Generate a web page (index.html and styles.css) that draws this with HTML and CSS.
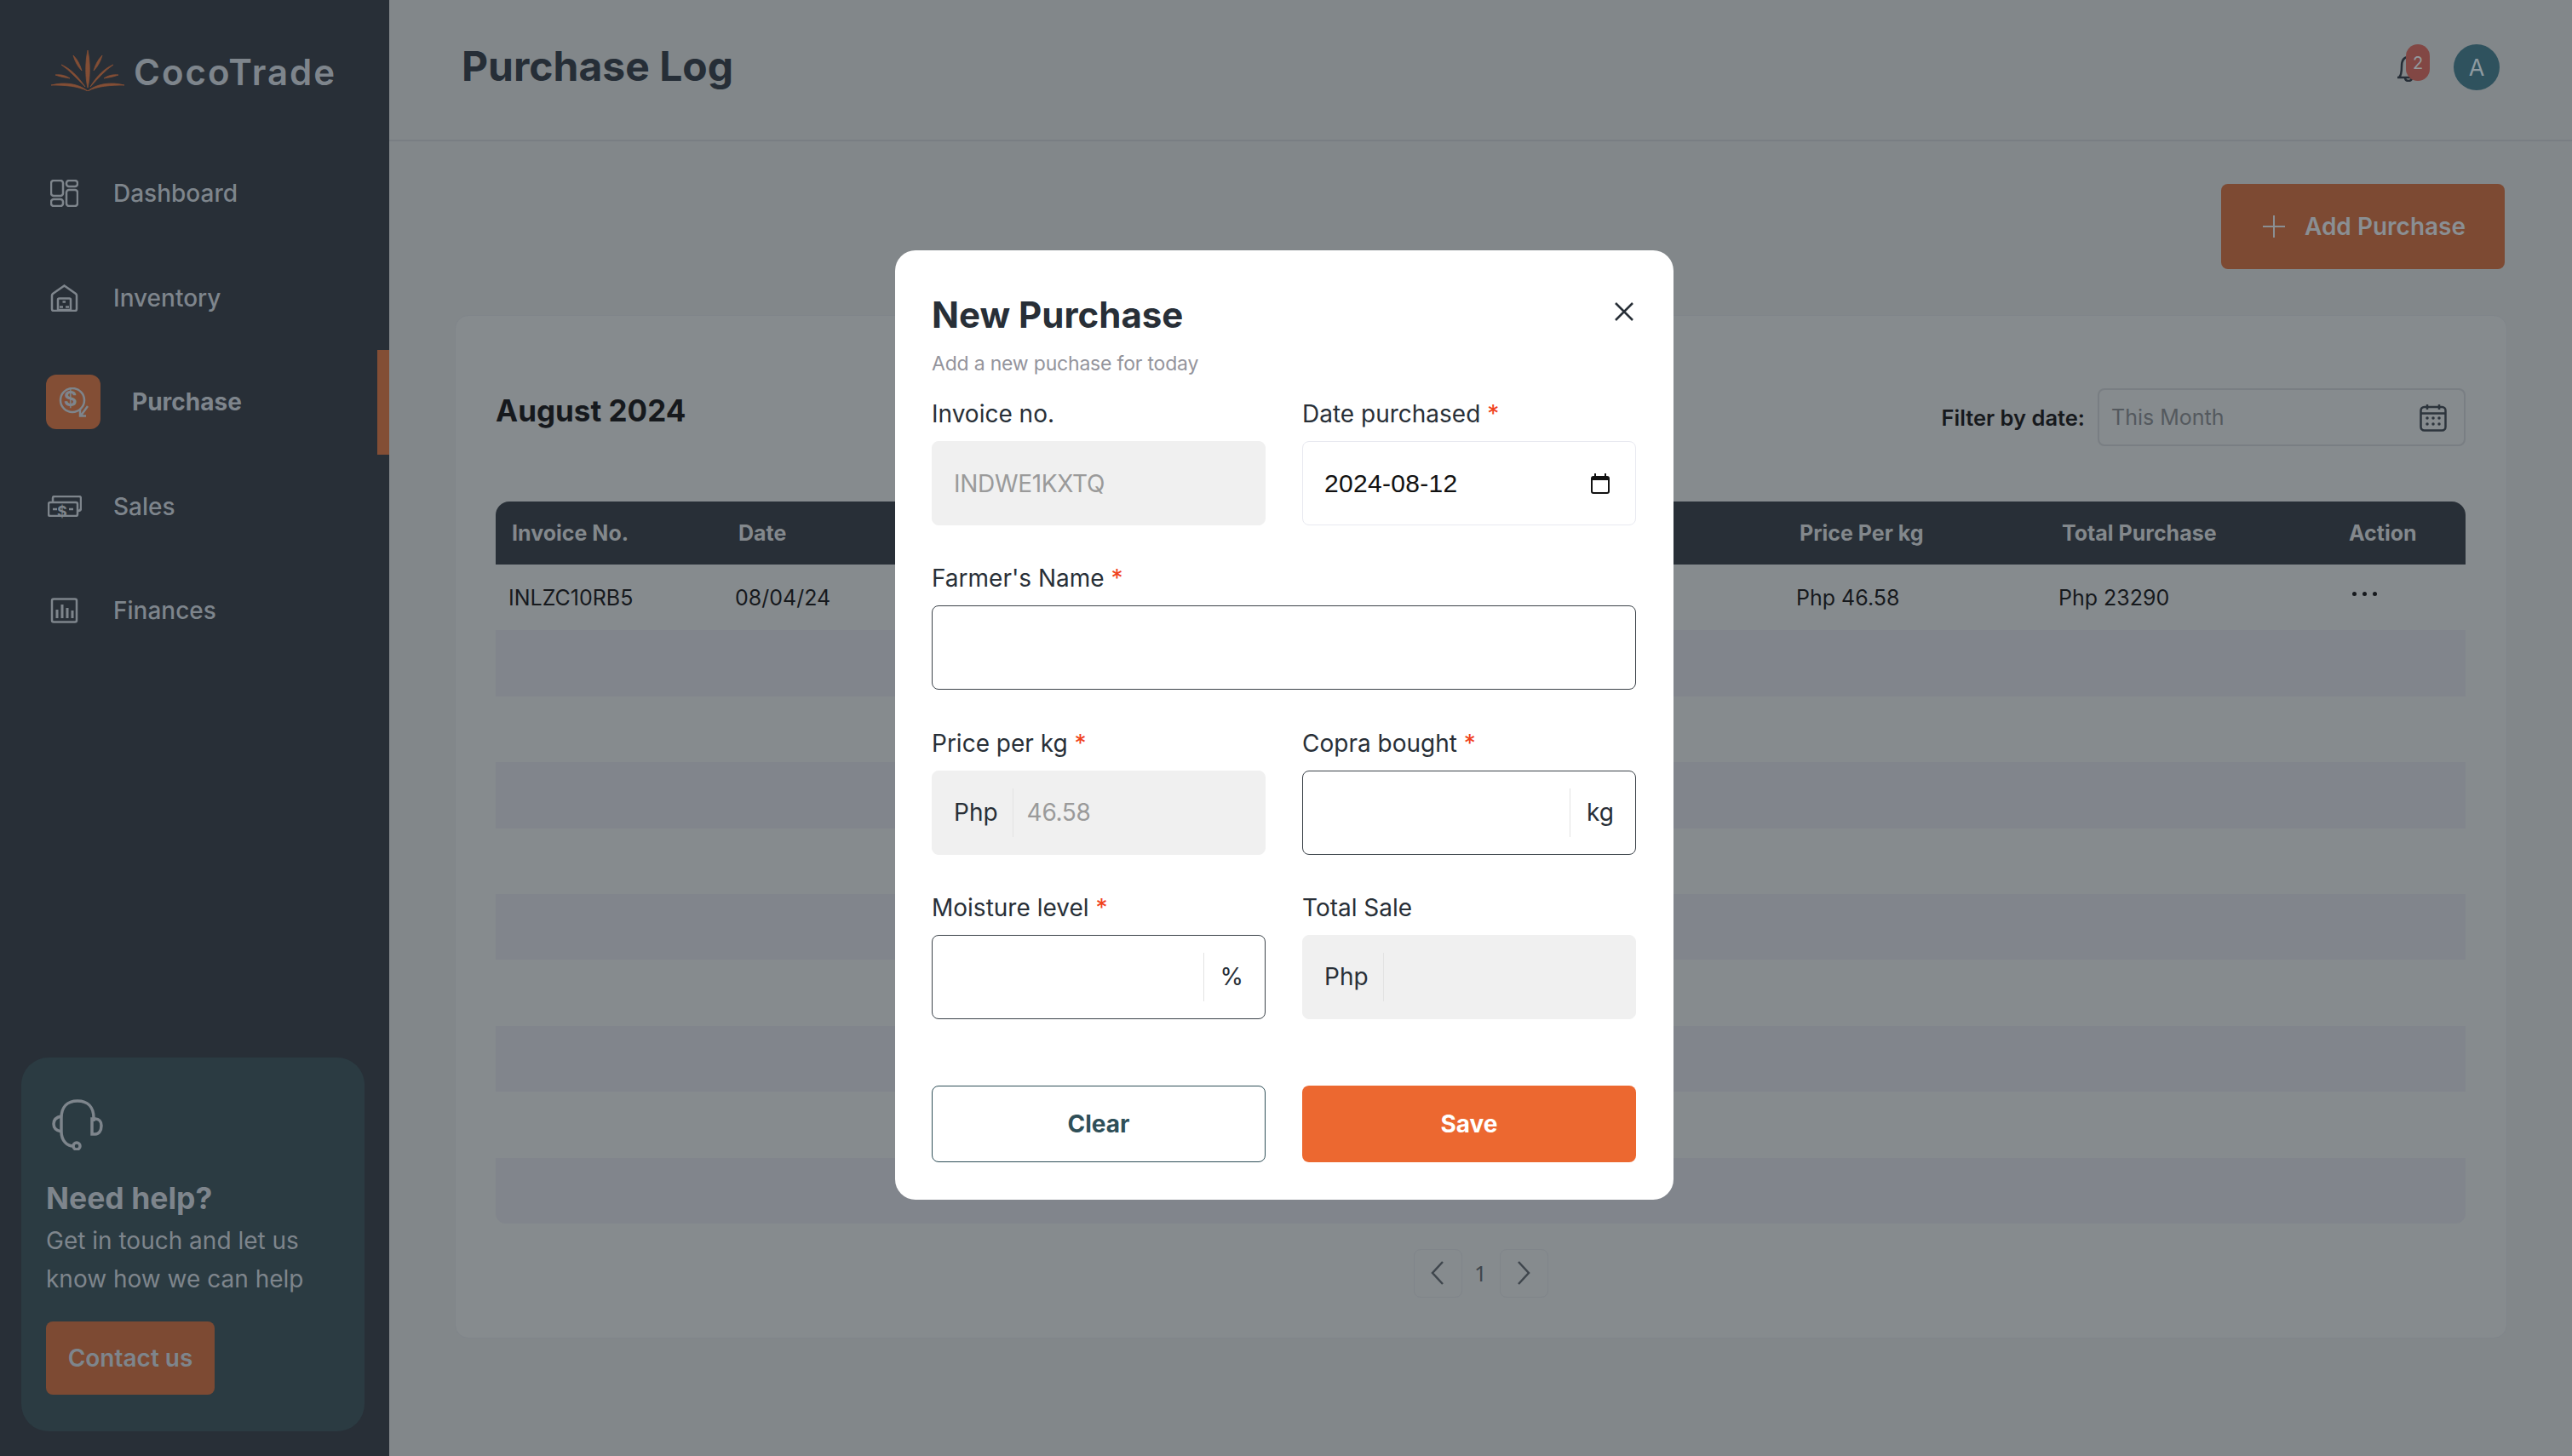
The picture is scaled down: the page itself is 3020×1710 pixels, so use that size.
FILE: index.html
```html
<html>
<head>
  <title>CocoTrade - Purchase Log</title>
  <link rel="stylesheet" href="styles.css">
</head>
<body>

  <div id="app">

    <aside class="sidebar">
      <div class="logo">
        <svg class="logo-mark" width="86" height="48" viewBox="0 0 86 48">
          <path d="M43 0 C40 14 40 32 43 44 C46 32 46 14 43 0Z"/>
          <path d="M26 6 C28 13 31 19 36 24 C34 17 31 11 26 6Z"/>
          <path d="M60 6 C58 13 55 19 50 24 C52 17 55 11 60 6Z"/>
          <path d="M12 17 C22 21 32 31 40 43 C30 33 22 24 12 17Z"/>
          <path d="M73 17 C63 21 53 31 46 43 C55 33 63 24 73 17Z"/>
          <path d="M5 29 C11 28 18 30 22 33 C16 32 10 31 5 29Z"/>
          <path d="M79 29 C73 28 66 30 62 33 C68 32 74 31 79 29Z"/>
          <path d="M0 41 C16 37 32 39 43 48 C54 39 70 37 86 41 C70 41 54 42 43 48 C32 42 16 41 0 41Z"/>
        </svg>
        <span class="logo-text">CocoTrade</span>
      </div>

      <nav class="nav">
        <a class="nav-item">
          <svg class="nav-icon" width="33" height="32" viewBox="0 0 33 32">
            <rect x="1" y="1" width="14" height="18" rx="3"/>
            <rect x="19" y="1" width="13" height="7" rx="3"/>
            <rect x="1" y="23" width="14" height="8" rx="3"/>
            <rect x="19" y="12" width="13" height="19" rx="3"/>
          </svg>
          <span>Dashboard</span>
        </a>
        <a class="nav-item">
          <svg class="nav-icon" width="33" height="32" viewBox="0 0 33 32">
            <path d="M2 29 V13 C2 12 2.500 11.500 3 11 L16.500 1.500 L30 11 C30.500 11.500 31 12 31 13 V29 C31 30 30.500 31 29 31 H4 C2.500 31 2 30 2 29Z"/>
            <path d="M9 31 V18 C9 17 9.500 16.500 10.500 16.500 H22.500 C23.500 16.500 24 17 24 18 V31"/>
            <path d="M14.500 20.500 H18 M11 26.500 H15 M18 26.500 H22 M9 30 H24"/>
          </svg>
          <span>Inventory</span>
        </a>
        <a class="nav-item active">
          <span class="nav-chip">
            <svg class="nav-icon" width="38" height="38" viewBox="0 0 38 38">
              <circle cx="16" cy="15" r="14"/>
              <path d="M34 22 L26 33 M25 26 V33.500 H32"/>
            </svg>
            <span class="chip-dollar">$</span>
          </span>
          <span>Purchase</span>
        </a>
        <a class="nav-item">
          <svg class="nav-icon wide" width="40" height="25" viewBox="0 0 40 25">
            <rect x="1" y="8" width="34" height="16" rx="2"/>
            <path d="M6 8 V3 C6 2 6.500 1 8 1 H37 C38 1 39 2 39 3 V15 C39 17 38 18 35 18"/>
            <path d="M6 16 H11 M25 16 H30"/>
          </svg>
          <span class="sales-dollar">$</span>
          <span>Sales</span>
        </a>
        <a class="nav-item">
          <svg class="nav-icon" width="33" height="30" viewBox="0 0 33 30">
            <rect x="2" y="1.500" width="29" height="27" rx="2"/>
            <path d="M8 24 V14 M14 24 V8 M20 24 V12 M26 24 V15" stroke-width="3"/>
          </svg>
          <span>Finances</span>
        </a>
      </nav>

      <div class="help-card">
        <svg class="help-icon" width="60" height="60" viewBox="0 0 60 60">
          <path d="M11 38 V22 C11 9 18 2 30 2 C42 2 49 9 49 22 V26"/>
          <path d="M11 20 C5 21 2 24 2 29 C2 34 5 37 11 38"/>
          <path d="M47 23 H51 C55 23 58 26 58 31 C58 37 55 41 51 41 H47Z"/>
          <path d="M11 38 C11 49 18 55 25 55"/>
          <circle cx="29" cy="55" r="4"/>
        </svg>
        <h3>Need help?</h3>
        <p>Get in touch and let us<br>know how we can help</p>
        <button class="contact-btn">Contact us</button>
      </div>
    </aside>

    <main class="main">
      <header class="topbar">
        <h1>Purchase Log</h1>
        <div class="topbar-right">
          <div class="bell">
            <svg width="24" height="32" viewBox="0 0 24 32">
              <path d="M2 27 C4 25 5 21 5 14 C5 7 8 3 13 3 C18 3 21 7 21 14 C21 21 22 25 24 27 H0 M9 27 C9 30 11 31 13 31 C15 31 17 30 17 27"/>
            </svg>
            <span class="badge">2</span>
          </div>
          <div class="avatar">A</div>
        </div>
      </header>

      <div class="actions">
        <button class="add-btn">
          <svg width="28" height="28" viewBox="0 0 28 28"><path d="M14 1 V27 M1 14 H27"/></svg>
          Add Purchase
        </button>
      </div>

      <section class="card">
        <div class="card-head">
          <h2>August 2024</h2>
          <div class="filter">
            <label>Filter by date:</label>
            <div class="filter-box">
              <span>This Month</span>
              <svg width="32" height="33" viewBox="0 0 32 33">
                <rect x="1.500" y="4" width="29" height="27.500" rx="4"/>
                <path d="M9 1 V7 M23 1 V7 M2 11.500 H30"/>
                <path class="dots" d="M9 17 h.01 M16 17 h.01 M23 17 h.01 M9 24 h.01 M16 24 h.01 M23 24 h.01"/>
              </svg>
            </div>
          </div>
        </div>

        <div class="table">
          <div class="table-row table-header">
            <div>Invoice No.</div>
            <div>Date</div>
            <div></div>
            <div>Price Per kg</div>
            <div>Total Purchase</div>
            <div>Action</div>
          </div>
          <div class="table-row">
            <div>INLZC10RB5</div>
            <div>08/04/24</div>
            <div></div>
            <div>Php 46.58</div>
            <div>Php 23290</div>
            <div class="row-menu"><i></i><i></i><i></i></div>
          </div>
          <div class="table-row"></div>
          <div class="table-row"></div>
          <div class="table-row"></div>
          <div class="table-row"></div>
          <div class="table-row"></div>
          <div class="table-row"></div>
          <div class="table-row"></div>
          <div class="table-row"></div>
          <div class="table-row"></div>
        </div>

        <div class="pagination">
          <button class="page-btn">
            <svg width="16" height="28" viewBox="0 0 16 28"><path d="M14 1 L2 14 L14 27"/></svg>
          </button>
          <span class="page-num">1</span>
          <button class="page-btn">
            <svg width="16" height="28" viewBox="0 0 16 28"><path d="M2 1 L14 14 L2 27"/></svg>
          </button>
        </div>
      </section>
    </main>
  </div>

  <!-- new purchase modal -->
  <div class="backdrop">
    <form class="modal">
      <div class="modal-title">
        <h2>New Purchase</h2>
        <svg class="close" width="22" height="22" viewBox="0 0 22 22"><path d="M1 1 L21 21 M21 1 L1 21"/></svg>
      </div>
      <p class="modal-sub">Add a new puchase for today</p>

      <div class="form-grid">
        <div class="field">
          <label>Invoice no.</label>
          <div class="control disabled"><input type="text" value="INDWE1KXTQ" disabled></div>
        </div>
        <div class="field">
          <label>Date purchased <b>*</b></label>
          <div class="control date-control">
            <input type="text" value="2024-08-12">
            <svg width="22" height="24" viewBox="0 0 22 24">
              <path d="M5 0 V4 M17 0 V4" stroke-width="2"/>
              <rect x="1" y="4" width="20" height="19" rx="2" stroke-width="2"/>
              <path d="M1 6 H21" stroke-width="4"/>
            </svg>
          </div>
        </div>
        <div class="field full">
          <label>Farmer's Name <b>*</b></label>
          <div class="control"><input type="text"></div>
        </div>
        <div class="field">
          <label>Price per kg <b>*</b></label>
          <div class="control disabled">
            <span class="addon left">Php</span>
            <input type="text" value="46.58" disabled>
          </div>
        </div>
        <div class="field">
          <label>Copra bought <b>*</b></label>
          <div class="control">
            <input type="text">
            <span class="addon right">kg</span>
          </div>
        </div>
        <div class="field">
          <label>Moisture level <b>*</b></label>
          <div class="control">
            <input type="text">
            <span class="addon right">%</span>
          </div>
        </div>
        <div class="field">
          <label>Total Sale</label>
          <div class="control disabled">
            <span class="addon left">Php</span>
            <input type="text" disabled>
          </div>
        </div>
      </div>

      <div class="modal-buttons">
        <button type="button" class="btn-clear">Clear</button>
        <button type="button" class="btn-save">Save</button>
      </div>
    </form>
  </div>

</body>
</html>
```

FILE: styles.css
```css
* {
  box-sizing: border-box;
}

body {
  margin: 0;
  background-color: #82878a;
  font-family: 'Inter', sans-serif;
  overflow: hidden;
}

button {
  font-family: inherit;
  border: none;
}

#app {
  display: flex;
  width: 3020px;
  height: 1710px;
}

/* sidebar */

.sidebar {
  width: 457px;
  flex-shrink: 0;
  display: flex;
  flex-direction: column;
  background-color: #282f37;
}

.logo {
  height: 166px;
  padding-left: 60px;
  padding-bottom: 1px;
  display: flex;
  align-items: center;
  gap: 11px;
}

.logo-mark {
  fill: #834e35;
  stroke: #834e35;
  stroke-width: 0.8;
}

.logo-text {
  margin-top: 3px;
  font-size: 42px;
  font-weight: 600;
  color: #7e858c;
  letter-spacing: 2px;
}

.nav-item {
  position: relative;
  height: 122.5px;
  padding-left: 59px;
  display: flex;
  align-items: center;
  gap: 41px;
  font-size: 28px;
  font-weight: 500;
  color: #7e858c;
}

.nav-icon {
  fill: none;
  stroke: #7e858c;
  stroke-width: 2.500;
  flex-shrink: 0;
}

.nav-icon.wide {
  margin-left: -3px;
  margin-right: -4px;
}

.sales-dollar {
  position: absolute;
  left: 67px;
  top: 56px;
  font-size: 18px;
  font-weight: 700;
}

.nav-item.active {
  padding-left: 54px;
  gap: 37px;
  font-weight: 700;
}

.nav-item.active::after {
  content: "";
  position: absolute;
  right: 0;
  top: 0;
  bottom: 0;
  width: 14px;
  background-color: #834e35;
}

.nav-chip {
  position: relative;
  width: 64px;
  height: 64px;
  border-radius: 12px;
  background-color: #834e35;
  display: flex;
  align-items: center;
  justify-content: center;
  padding-left: 3px;
  padding-top: 3px;
}

.chip-dollar {
  position: absolute;
  left: 21px;
  top: 14px;
  font-size: 24px;
  font-weight: 700;
}

.help-card {
  margin: auto 29px 29px 25px;
  height: 439px;
  border-radius: 32px;
  padding: 49px 29px 0;
  background-color: #2b3b42;
  color: #7e858c;
}

.help-icon {
  display: block;
  margin-left: 7px;
  fill: none;
  stroke: #7e858c;
  stroke-width: 3.500;
}

.help-card h3 {
  margin: 32px 0 2px;
  font-size: 35.500px;
  line-height: 50px;
  font-weight: 700;
}

.help-card p {
  margin: 0;
  font-size: 28px;
  line-height: 44.500px;
}

.contact-btn {
  display: block;
  margin-top: 28px;
  width: 198px;
  height: 86px;
  border-radius: 8px;
  background-color: #7d4a33;
  color: #7e858c;
  font-size: 28px;
  font-weight: 600;
}

/* main */

.main {
  flex: 1;
}

.topbar {
  height: 166px;
  padding: 0 85px 6px 85px;
  border-bottom: 2px solid #797e83;
  display: flex;
  align-items: center;
  justify-content: space-between;
}

.topbar h1 {
  margin: -3px 0 0;
  font-size: 48px;
  font-weight: 700;
  color: #262e37;
}

.topbar-right {
  display: flex;
  align-items: center;
  gap: 28px;
}

.bell {
  position: relative;
  width: 38px;
  height: 54px;
  padding-top: 12px;
}

.bell svg {
  display: block;
  fill: none;
  stroke: #262e37;
  stroke-width: 2.500;
}

.badge {
  position: absolute;
  right: 0;
  top: 0;
  width: 28px;
  height: 43px;
  border-radius: 14px;
  background-color: #824744;
  color: #939a9d;
  font-size: 20px;
  display: flex;
  align-items: center;
  justify-content: center;
}

.avatar {
  width: 54px;
  height: 54px;
  border-radius: 50%;
  background-color: #2f525e;
  color: #8e9aa0;
  font-size: 27px;
  display: flex;
  align-items: center;
  justify-content: center;
}

.actions {
  display: flex;
  justify-content: flex-end;
  padding: 50px 79px 0 0;
}

.add-btn {
  width: 333px;
  height: 100px;
  padding-left: 8px;
  border-radius: 8px;
  background-color: #7d4a33;
  color: #8a8f93;
  font-size: 28px;
  font-weight: 600;
  display: flex;
  align-items: center;
  justify-content: center;
  gap: 22px;
}

.add-btn svg {
  fill: none;
  stroke: #8a8f93;
  stroke-width: 2;
}

.card {
  margin: 54px 76px 0 77px;
  height: 1202px;
  padding: 85px 48px 0 47px;
  border-radius: 16px;
  border: 1px solid #80858a;
  background-color: #868b8e;
}

.card-head {
  display: flex;
  align-items: center;
  justify-content: space-between;
  height: 68px;
  margin-bottom: 65px;
}

.card-head h2 {
  margin: -16px 0 0;
  font-size: 35px;
  font-weight: 700;
  color: #16191d;
}

.filter {
  display: flex;
  align-items: center;
  gap: 15px;
  font-size: 25.500px;
  font-weight: 600;
  color: #16191d;
}

.filter-box {
  width: 432px;
  height: 68px;
  padding: 0 20px 0 14px;
  border: 2px solid #797e83;
  border-radius: 8px;
  display: flex;
  align-items: center;
  justify-content: space-between;
  font-size: 25px;
  font-weight: 400;
  color: #54595e;
}

.filter-box svg {
  fill: none;
  stroke: #2d353d;
  stroke-width: 2.500;
}

.filter-box .dots {
  stroke-linecap: round;
  stroke-width: 3.500;
}

.table {
  font-size: 25px;
}

.table-row {
  height: 77.400px;
  display: grid;
  grid-template-columns: 266px 250px 996px 308px 337px 156px;
  align-items: center;
  color: #16191d;
}

.table-row:nth-child(2n+3) {
  background-color: #81858c;
}

.table-row:last-child {
  border-radius: 0 0 12px 12px;
}

.table-row > div {
  padding-left: 15px;
}

.table-header {
  height: 74px;
  border-radius: 16px 16px 0 0;
  background-color: #282f37;
  color: #83888c;
  font-weight: 700;
}

.table-header > div {
  padding-left: 19px;
}

.table-row > .row-menu {
  display: flex;
  gap: 7px;
  padding-left: 23px;
  padding-bottom: 8px;
}

.row-menu i {
  width: 5px;
  height: 5px;
  border-radius: 50%;
  background-color: #16191d;
}

.pagination {
  margin-top: 30px;
  display: flex;
  justify-content: center;
  align-items: center;
}

.page-btn {
  width: 57px;
  height: 57px;
  border-radius: 8px;
  border: 1px solid #80858a;
  background: none;
  display: flex;
  align-items: center;
  justify-content: center;
}

.page-btn svg {
  fill: none;
  stroke: #3f464d;
  stroke-width: 2.500;
}

.page-num {
  width: 44px;
  text-align: center;
  font-family: 'Noto Sans', sans-serif;
  font-size: 26px;
  color: #3f464d;
}

/* modal */

.backdrop {
  position: fixed;
  left: 0;
  top: 0;
  width: 3020px;
  height: 1710px;
  padding: 294px 4px 0 0;
  display: flex;
  justify-content: center;
  align-items: flex-start;
}

.modal {
  width: 914px;
  height: 1115px;
  padding: 50px 44px 0 43px;
  border-radius: 24px;
  background-color: white;
  color: #282f37;
}

.modal-title {
  display: flex;
  align-items: center;
  justify-content: space-between;
  height: 50px;
}

.modal-title h2 {
  margin: 0;
  font-size: 42px;
  font-weight: 700;
}

.close {
  margin: -6px 3px 0 0;
  fill: none;
  stroke: #282f37;
  stroke-width: 2.500;
}

.modal-sub {
  margin: 18px 0 24px;
  font-size: 23px;
  line-height: 30px;
  letter-spacing: -0.2px;
  color: #94949c;
}

.form-grid {
  display: grid;
  grid-template-columns: minmax(0, 1fr) minmax(0, 1fr);
  column-gap: 43px;
  row-gap: 42.300px;
}

.field.full {
  grid-column: 1 / 3;
}

.field label {
  display: block;
  height: 40px;
  margin-bottom: 12px;
  font-size: 28px;
  line-height: 40px;
}

.field label b {
  font-weight: 400;
  color: #f0421c;
}

.control {
  height: 99px;
  display: flex;
  align-items: center;
  border: 1.500px solid #3b4249;
  border-radius: 8px;
  padding: 0 25px;
  font-size: 28px;
}

.control.disabled {
  border-color: #f0f0f0;
  background-color: #f0f0f0;
}

.control input {
  flex: 1;
  min-width: 0;
  height: 56px;
  padding: 0;
  border: none;
  outline: none;
  background: none;
  font-family: inherit;
  font-size: 28px;
  letter-spacing: -0.3px;
  color: #9a9a9a;
}

.control.date-control {
  border-color: #e8e9f0;
  padding-right: 30px;
}

.control.date-control input {
  font-family: 'Liberation Sans', sans-serif;
  font-size: 30px;
  letter-spacing: 0.3px;
  color: #111;
}

.date-control svg {
  fill: none;
  stroke: #111;
}

.addon {
  height: 57px;
  display: flex;
  align-items: center;
}

.addon.left {
  padding-right: 17px;
  margin-right: 16px;
  border-right: 1px solid #e3e3e3;
}

.addon.right {
  padding-left: 19px;
  border-left: 1px solid #e3e3e3;
}

.modal-buttons {
  display: grid;
  grid-template-columns: minmax(0, 1fr) minmax(0, 1fr);
  column-gap: 43px;
  margin-top: 78.500px;
}

.modal-buttons button {
  height: 90px;
  border-radius: 8px;
  font-size: 28px;
  font-weight: 700;
}

.btn-clear {
  background: white;
  border: 1.500px solid #2f4f58;
  color: #2f4f58;
}

.btn-save {
  background-color: #ec6830;
  color: white;
}
```
